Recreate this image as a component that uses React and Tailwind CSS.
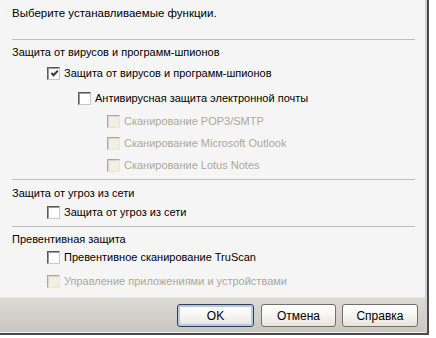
import React from "react";

const font = { fontFamily: '"Liberation Sans", Arial, sans-serif' };

function Box({ checked, disabled }) {
  return (
    <div
      className={
        "w-[13px] h-[13px] shrink-0 border-[1px] flex items-center justify-center " +
        (disabled
          ? "bg-[#f1efe2] border-t-[#a8a8a8] border-l-[#a8a8a8] border-b-[#e4e4e4] border-r-[#e4e4e4]"
          : "bg-white border-t-[#5a5a5a] border-l-[#5a5a5a] border-b-[#c8c8c8] border-r-[#c8c8c8]")
      }
    >
      <div
        className={
          "w-[11px] h-[11px] flex items-center justify-center border-t border-l " +
          (disabled ? "border-[#d8d6cc]" : "border-[#9a9a9a]")
        }
      >
        {checked && (
          <svg width="9" height="9" viewBox="0 0 9 9">
            <path d="M1.5 4 L3.5 6.2 L7.8 1.8" fill="none" stroke="#3a3a3a" strokeWidth="2" />
          </svg>
        )}
      </div>
    </div>
  );
}

function Check({ x, label, checked, disabled, mt }) {
  return (
    <div className={"h-[18px] flex items-center " + mt} style={{ paddingLeft: x }}>
      <Box checked={checked} disabled={disabled} />
      <span
        className={
          "ml-[4px] text-[11px] whitespace-nowrap " +
          (disabled ? "text-[#aca899]" : "text-black")
        }
      >
        {label}
      </span>
    </div>
  );
}

function Header({ label, mt, big }) {
  return (
    <div
      className={
        "h-[18px] flex items-center pl-[12px] text-black whitespace-nowrap " +
        (big ? "text-[11.5px] " : "text-[11px] ") +
        mt
      }
    >
      {label}
    </div>
  );
}

function Sep({ mt }) {
  return <div className={"ml-[12px] w-[403px] h-px bg-[#bdbdbd] " + mt} />;
}

function Btn({ children, w, focus }) {
  return (
    <div
      className={
        "h-[23px] rounded-[3px] border flex items-center justify-center bg-gradient-to-b from-white via-[#f6f5f1] to-[#e6e3da] text-[12px] text-black " +
        w +
        (focus ? " border-[#2f3f5a] shadow-[inset_0_0_0_2px_#b6c8e2]" : " border-[#6f6f6f]")
      }
    >
      {children}
    </div>
  );
}

export default function App() {
  return (
    <div className="w-[436px] h-[338px] bg-white" style={font}>
      <div className="w-[429px] h-[335px] flex flex-col border-r-2 border-b-2 border-[#4a4a4a]">
        <div className="flex-1 flex flex-col border-r-2 border-[#cfcfcf]">
          <div className="h-[297px] bg-[#f5f5f5] flex flex-col pt-[5px]">
            <Header label="Выберите устанавливаемые функции." mt="" big />
            <Sep mt="mt-[16px]" />
            <Header label="Защита от вирусов и программ-шпионов" mt="mt-[3px]" />
            <Check x={47} label="Защита от вирусов и программ-шпионов" checked mt="mt-[3px]" />
            <Check x={78} label="Антивирусная защита электронной почты" mt="mt-[7px]" />
            <Check x={107} label="Сканирование POP3/SMTP" disabled mt="mt-[5px]" />
            <Check x={107} label="Сканирование Microsoft Outlook" disabled mt="mt-[4px]" />
            <Check x={107} label="Сканирование Lotus Notes" disabled mt="mt-[4px]" />
            <Sep mt="mt-[5px]" />
            <Header label="Защита от угроз из сети" mt="mt-[4px]" />
            <Check x={47} label="Защита от угроз из сети" mt="mt-[1px]" />
            <Sep mt="mt-[5px]" />
            <Header label="Превентивная защита" mt="mt-[3px]" />
            <Check x={47} label="Превентивное сканирование TruScan" mt="" />
            <Check x={47} label="Управление приложениями и устройствами" disabled mt="mt-[6px]" />
          </div>
          <div className="flex-1 bg-gradient-to-b from-[#dedad6] to-[#c9c5c1] border-t border-[#e8e6e2] border-b border-b-[#efefef] flex justify-end items-start pt-[6px] pr-[7px]">
            <div className="flex">
              <Btn w="w-[77px]" focus>OK</Btn>
              <div className="w-[7px]" />
              <Btn w="w-[75px]">Отмена</Btn>
              <div className="w-[6px]" />
              <Btn w="w-[76px]">Справка</Btn>
            </div>
          </div>
        </div>
      </div>
    </div>
  );
}
